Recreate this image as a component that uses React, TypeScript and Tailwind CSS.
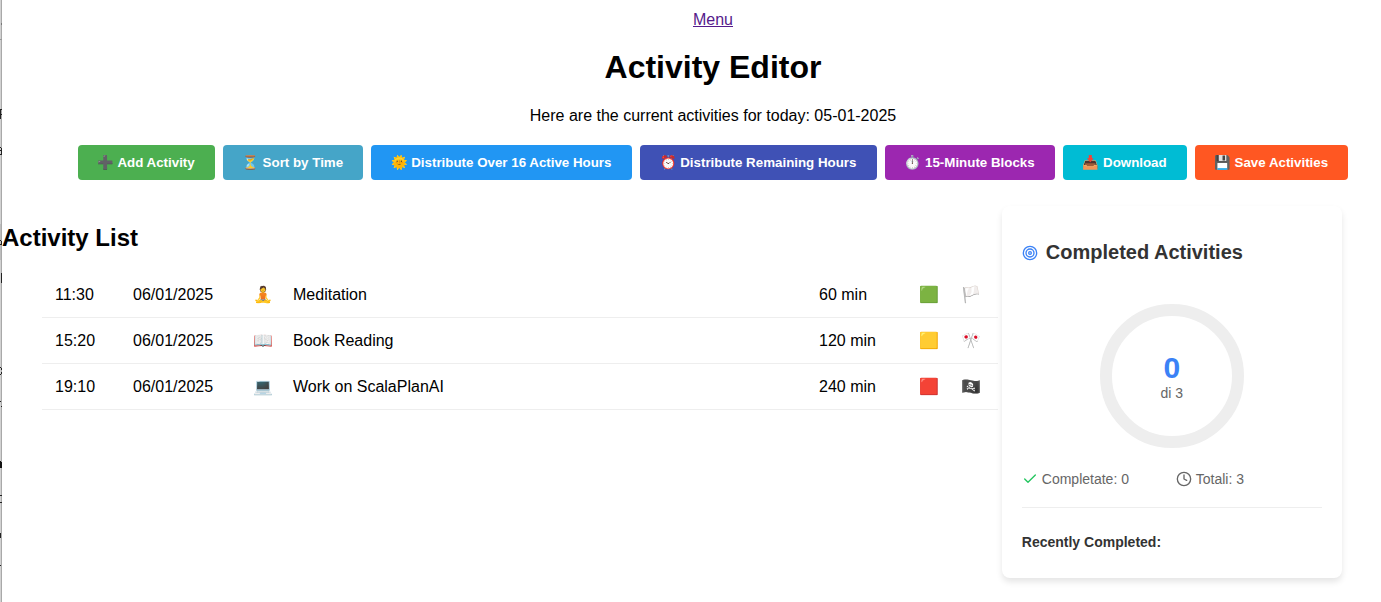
import { Check, Clock, Target } from "lucide-react";

const actions = [
  { label: "➕ Add Activity", style: "w-[137px] bg-[#4caf50]" },
  { label: "⏳ Sort by Time", style: "w-[140px] bg-[#45a5c8]" },
  { label: "🌞 Distribute Over 16 Active Hours", style: "w-[261px] bg-[#2196f3]" },
  { label: "⏰ Distribute Remaining Hours", style: "w-[237px] bg-[#3f51b5]" },
  { label: "⏱️ 15-Minute Blocks", style: "w-[170px] bg-[#9c27b0]" },
  { label: "📥 Download", style: "w-[124px] bg-[#00bcd4]" },
  { label: "💾 Save Activities", style: "w-[153px] bg-[#ff5722]" },
];

const activities = [
  { time: "11:30", icon: "🧘", name: "Meditation", minutes: 60, level: "🟩", flag: "🏳️" },
  { time: "15:20", icon: "📖", name: "Book Reading", minutes: 120, level: "🟨", flag: "🎌" },
  { time: "19:10", icon: "💻", name: "Work on ScalaPlanAI", minutes: 240, level: "🟥", flag: "🏴‍☠️" },
];

// The edge of the panel that lies behind the page.
function BackPanelEdge() {
  return (
    <svg className="h-[602px] w-0.5 shrink-0" viewBox="0 0 2 602" shapeRendering="crispEdges">
      <rect width="2" height="602" fill="#d2d2d2" />
      <rect y="224" width="2" height="36" fill="#bdbdbd" />
      <rect x="1" width="1" height="602" fill="#a9a9a9" />
      <path d="M0 39.5h2" stroke="#999" />
      <path
        d="M0 109.5h2M0 114.5h2M0.5 109v10M0 147.5h1M0 150.5h2M0 154.5h2M1.5 148v6M0 240.5h1M0 244.5h2M1.5 241v3M1.5 273v10M0 367.5h1M1.5 368v2M0 374.5h1M1.5 372v2M0 401.5h1M1.5 406v1M0 495.5h2M0 502.5h2M0 533.5h1M0 537.5h1M0.5 534v4M0 565.5h1"
        stroke="#222"
      />
      <path d="M0 461h1v1h1v6h-2z" fill="#111" />
      <path d="M1.5 22.5v2" stroke="#777" />
    </svg>
  );
}

function CompletedCard() {
  return (
    <aside className="mt-[26px] flex h-[372px] w-[340px] shrink-0 flex-col rounded-lg bg-white px-5 shadow-[0_4px_6px_rgba(0,0,0,0.1)]">
      <h3 className="mt-[35px] flex h-[23px] items-center gap-2 text-[20px] leading-[23px] font-bold text-[#333]">
        <Target className="size-4 text-[#3b82f6]" />
        Completed Activities
      </h3>
      <div className="mt-10 flex size-36 flex-col items-center self-center rounded-full border-12 border-[#eee]">
        <span className="mt-[35px] text-[30px] leading-[34px] font-bold text-[#3b82f6]">0</span>
        <span className="text-sm leading-4 text-[#666]">di 3</span>
      </div>
      <div className="mt-[23px] grid grid-cols-[154px_1fr] text-sm leading-4 text-[#666]">
        <span className="flex items-center gap-1">
          <Check className="size-4 text-[#22c55e]" />
          Completate: 0
        </span>
        <span className="flex items-center gap-1">
          <Clock className="size-4" />
          Totali: 3
        </span>
      </div>
      <div className="mt-5 border-t border-[#eee] pt-[26px]">
        <h4 className="text-sm leading-4 font-bold text-[#333]">Recently Completed:</h4>
      </div>
    </aside>
  );
}

export default function App() {
  return (
    <div className="flex h-[602px] w-full overflow-hidden bg-white font-['Liberation_Sans',Arial,sans-serif] text-base leading-[18px] text-black">
      <BackPanelEdge />
      <main className="w-[1422px] shrink-0">
        <header className="flex flex-col items-center">
          <a href="#" className="mt-[11px] text-[#551a8b] underline">Menu</a>
          <h1 className="mt-5 text-[32px] leading-[37px] font-bold">Activity Editor</h1>
          <p className="mt-[21px]">Here are the current activities for today: 05-01-2025</p>
          <div className="mt-5 flex gap-2">
            {actions.map((action) => (
              <button
                key={action.label}
                className={`h-[35px] shrink-0 rounded pr-px text-[13.333px] leading-[15px] font-bold whitespace-nowrap text-white ${action.style}`}
              >
                {action.label}
              </button>
            ))}
          </div>
        </header>
        <div className="flex">
          <section className="w-[999.8px] shrink-0">
            <h2 className="mt-11 text-2xl leading-[27px] font-bold">Activity List</h2>
            <ul className="mt-[21px] ml-10 w-[956px]">
              {activities.map((item) => (
                <li
                  key={item.time}
                  className="grid h-[46px] grid-cols-[78px_120px_40px_526px_100px_42px_1fr] items-center border-b border-[#eee] pl-[13px] whitespace-nowrap"
                >
                  <span>{item.time}</span>
                  <span>06/01/2025</span>
                  <span>{item.icon}</span>
                  <span>{item.name}</span>
                  <span>{item.minutes} min</span>
                  <span>{item.level}</span>
                  <span>{item.flag}</span>
                </li>
              ))}
            </ul>
          </section>
          <CompletedCard />
        </div>
      </main>
    </div>
  );
}
